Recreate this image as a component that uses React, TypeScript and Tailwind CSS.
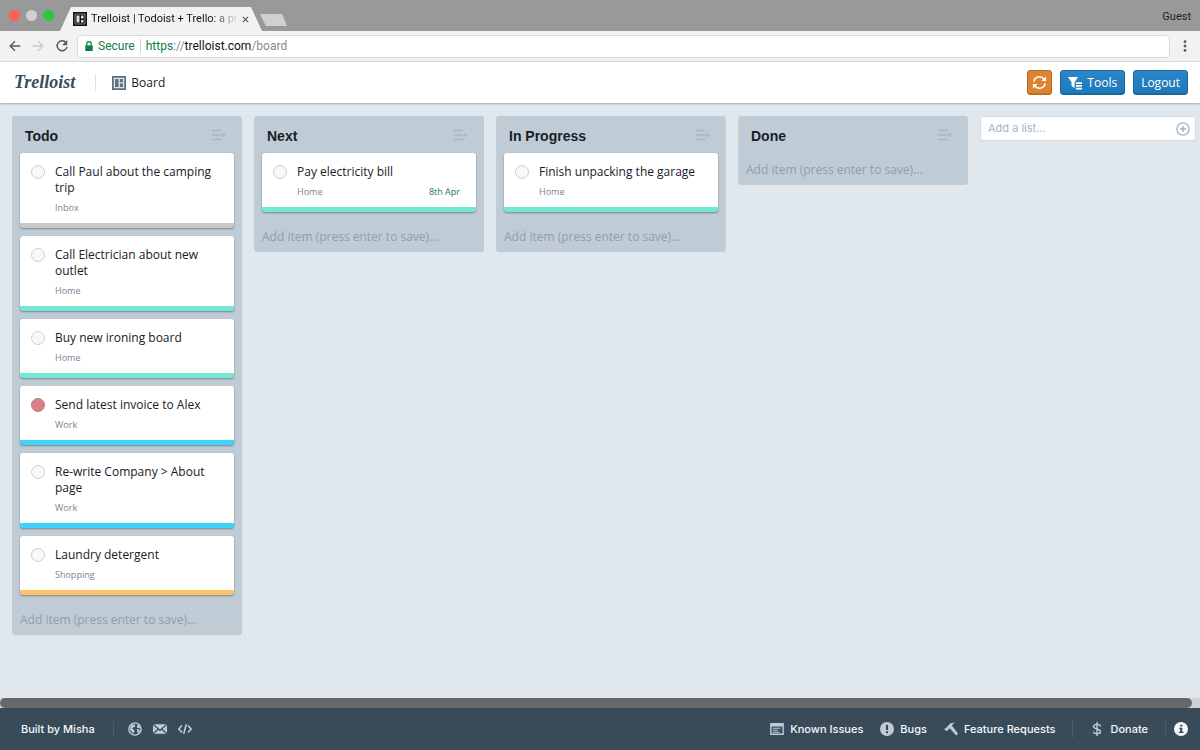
import type { ReactNode } from "react";
import clsx from "clsx";

type Task = {
  title: string;
  project: "Inbox" | "Home" | "Work" | "Shopping";
  due?: string;
  urgent?: boolean;
};

type List = { name: string; tasks: Task[] };

const lists: List[] = [
  {
    name: "Todo",
    tasks: [
      { title: "Call Paul about the camping trip", project: "Inbox" },
      { title: "Call Electrician about new outlet", project: "Home" },
      { title: "Buy new ironing board", project: "Home" },
      { title: "Send latest invoice to Alex", project: "Work", urgent: true },
      { title: "Re-write Company > About page", project: "Work" },
      { title: "Laundry detergent", project: "Shopping" },
    ],
  },
  {
    name: "Next",
    tasks: [{ title: "Pay electricity bill", project: "Home", due: "8th Apr" }],
  },
  {
    name: "In Progress",
    tasks: [{ title: "Finish unpacking the garage", project: "Home" }],
  },
  { name: "Done", tasks: [] },
];

// bottom stripe of a card, one colour per Todoist project
const stripe = {
  Inbox: "border-[#c8c8c8]",
  Home: "border-[#74e8d4]",
  Work: "border-[#3fd2fb]",
  Shopping: "border-[#ffc36c]",
};

function Icon({ className = "size-3.5", children }: { className?: string; children: ReactNode }) {
  return (
    <svg viewBox="0 0 16 16" fill="currentColor" aria-hidden className={clsx("shrink-0", className)}>
      {children}
    </svg>
  );
}

function BrowserChrome() {
  return (
    <div className="font-[Roboto,sans-serif]">
      <div className="flex h-[31px] items-end bg-[#999]">
        <div className="flex gap-1.5 self-center pl-[9px]">
          <span className="size-[11px] rounded-full bg-[#ff5f57]" />
          <span className="size-[11px] rounded-full bg-[#d1d1d1]" />
          <span className="size-[11px] rounded-full bg-[#28c941]" />
        </div>
        <div className="ml-1.5 flex h-6 w-[202px] items-center bg-[#f2f2f2] pr-[15px] pl-[13px] [clip-path:polygon(11px_0,191px_0,100%_100%,0_100%)]">
          <svg viewBox="0 0 14 14" aria-hidden className="size-3.5 shrink-0">
            <path d="M0 0h14v14H0z" fill="#111" />
            <path d="M2 2h10v10H2z" fill="none" stroke="#999" strokeWidth="0.8" />
            <path d="M3.5 3.5h3v7h-3zM8 3.5h2.5v3H8zM8 8h2.5v2.5H8z" fill="#ddd" />
          </svg>
          <span className="ml-1 flex-1 pt-px text-[11px] whitespace-nowrap text-[#111] [mask-image:linear-gradient(90deg,#000_82%,transparent)]">
            Trelloist | Todoist + Trello: a pr
          </span>
          <button type="button" aria-label="Close tab" className="ml-1 text-[#555]">
            <svg viewBox="0 0 8 8" stroke="currentColor" strokeWidth="1.3" className="size-[7px]">
              <path d="M1 1l6 6M7 1L1 7" />
            </svg>
          </button>
        </div>
        <button
          type="button"
          aria-label="New tab"
          className="mb-[5px] -ml-0.5 h-3 w-[27px] bg-[#d0d0d0] [clip-path:polygon(0_0,82%_0,100%_100%,22%_100%)]"
        />
        <span className="ml-auto self-center pt-[3px] pr-[9px] text-[11px] text-[#222]">Guest</span>
      </div>
      <div className="flex h-[31px] items-center border-b border-[#dcdcdc] bg-[#f2f2f2] pl-2">
        <button type="button" aria-label="Back" className="text-[#5a5a5a]">
          <Icon><path d="M14 8H2.5M8 2.5L2.5 8 8 13.5" fill="none" stroke="currentColor" strokeWidth="1.6" /></Icon>
        </button>
        <button type="button" aria-label="Forward" className="ml-[9px] text-[#ccc]">
          <Icon><path d="M2 8h11.5M8 2.5L13.5 8 8 13.5" fill="none" stroke="currentColor" strokeWidth="1.6" /></Icon>
        </button>
        <button type="button" aria-label="Reload" className="ml-2.5 text-[#5a5a5a]">
          <Icon>
            <path d="M12.6 4.2A5.7 5.7 0 1 0 13.7 9" fill="none" stroke="currentColor" strokeWidth="1.7" />
            <path d="M14 1v6H8z" />
          </Icon>
        </button>
        <div className="ml-2 flex h-[23px] flex-1 items-center rounded-sm border border-[#dadada] bg-white px-1.5 text-xs text-[#8a8a8a]">
          <Icon className="size-2.5 text-[#0b8043]">
            <path d="M2 7h12v9H2z" />
            <path d="M4.5 8V4.5a3.5 3.5 0 0 1 7 0V8" fill="none" stroke="currentColor" strokeWidth="2" />
          </Icon>
          <span className="ml-1 text-[#0b8043]">Secure</span>
          <span className="mx-[5px] h-3.5 w-px bg-[#d5d5d5]" />
          <span>
            <span className="text-[#0b8043]">https</span>://<span className="text-[#111]">trelloist.com</span>/board
          </span>
        </div>
        <button type="button" aria-label="Menu" className="mx-2 text-[#5a5a5a]">
          <Icon>
            <circle cx="8" cy="3" r="1.6" />
            <circle cx="8" cy="8" r="1.6" />
            <circle cx="8" cy="13" r="1.6" />
          </Icon>
        </button>
      </div>
    </div>
  );
}

const button =
  "flex h-[25px] items-center rounded-[3px] border text-xs text-white shadow-[inset_0_-1px_0_rgba(16,22,26,0.15)]";

function Header() {
  return (
    <header className="z-10 flex h-[41px] items-center bg-white pr-3 pl-3.5 shadow-[0_1px_2px_rgba(16,22,26,0.3)]">
      <a
        href="#"
        className="font-['Liberation_Serif',cursive] text-[18px] font-bold text-[#3a4b59] italic"
      >
        Trelloist
      </a>
      <span className="ml-5 h-[17px] w-px bg-[#dde1e4]" />
      <a href="#board" className="ml-4 flex items-center gap-[5px] text-xs text-[#182026]">
        <Icon className="size-3.5 text-[#5c7080]">
          <path d="M1 1h14v14H1z" fill="#dfe5ea" stroke="currentColor" strokeWidth="2" />
          <path d="M3.5 3.5h4v9h-4zM9 3.5h3.5V7H9zM9 8.500h3.5v4H9z" />
        </Icon>
        Board
      </a>
      <div className="ml-auto flex gap-2">
        <button
          type="button"
          aria-label="Sync"
          className={clsx(button, "w-[25px] justify-center border-[#b5691f] bg-[#de8430]")}
        >
          <Icon className="size-[15px]">
            <path d="M2 7a6 6 0 0 1 10.7-2.7M14 9a6 6 0 0 1-10.7 2.7" fill="none" stroke="currentColor" strokeWidth="1.7" />
            <path d="M15 1.500v5H10zM1 14.500v-5h5z" />
          </Icon>
        </button>
        <button
          type="button"
          className={clsx(button, "gap-[5px] border-[#1a679f] bg-linear-to-b from-[#2c86c7] to-[#1a79ba] px-[7px]")}
        >
          <Icon className="size-3.5">
            <path d="M0 1h11.500L7.500 7v7L4 11V7z" />
            <path d="M9 7h7v2H9zM9 10.300h7v2H9zM9 13.500h7v2H9z" />
          </Icon>
          Tools
        </button>
        <button
          type="button"
          className={clsx(button, "border-[#1a679f] bg-linear-to-b from-[#2c86c7] to-[#1a79ba] px-[7px]")}
        >
          Logout
        </button>
      </div>
    </header>
  );
}

function TaskCard({ task }: { task: Task }) {
  return (
    <li
      className={clsx(
        "flex gap-2.5 rounded-[3px] border-b-[5px] bg-white pt-[11px] pr-4 pb-2 pl-[11px] shadow-[0_1px_2px_rgba(16,22,26,0.4)]",
        stripe[task.project],
      )}
    >
      <input
        type="checkbox"
        aria-label={task.title}
        className={clsx(
          "mt-px size-3.5 shrink-0 appearance-none rounded-full border",
          task.urgent ? "border-[#bf7a7f] bg-[#d68086]" : "border-[#ccd1d5] bg-[#f7f8fa]",
        )}
      />
      <div className="min-w-0 flex-1">
        <h3 className="text-xs leading-4 text-[#182026]">{task.title}</h3>
        <p className="mt-1 flex justify-between text-[9px] leading-[15px] text-[#738694]">
          {task.project}
          {task.due && <span className="text-[#0d8050]">{task.due}</span>}
        </p>
      </div>
    </li>
  );
}

function BoardList({ list }: { list: List }) {
  return (
    <section className="flex w-[230px] shrink-0 flex-col rounded-[3px] bg-[#bfccd6] px-2 pb-1.5">
      <div className="flex h-[37px] items-center justify-between pr-2 pl-[5px]">
        <h2 className="pt-0.5 font-['Liberation_Sans',sans-serif] text-sm font-bold text-[#182026]">{list.name}</h2>
        <button type="button" aria-label={`${list.name} options`} className="text-[#a7b6c2]">
          <Icon className="size-3.5">
            <path d="M0 2h10.500v1.700H0zM0 7.200h10.500v1.700H0zM0 12.400h10.500v1.700H0zM12 5l3.500 3-3.500 3z" />
          </Icon>
        </button>
      </div>
      {list.tasks.length > 0 && (
        <ul className="mb-2 flex flex-col gap-2">
          {list.tasks.map((task) => (
            <TaskCard key={task.title} task={task} />
          ))}
        </ul>
      )}
      <input
        type="text"
        aria-label={`Add item to ${list.name}`}
        placeholder="Add item (press enter to save)..."
        className="mt-1.5 h-5 w-full bg-transparent text-xs outline-none placeholder:text-[#8f9fad]"
      />
    </section>
  );
}

function Footer() {
  return (
    <footer className="flex h-[42px] items-center bg-[#394b59] pr-3 pl-[21px] font-[Inter,sans-serif] text-[11px] font-medium text-[#f5f8fa]">
      <span>Built by Misha</span>
      <span className="mr-3.5 ml-[18px] h-[17px] w-px bg-[#4a5c6a]" />
      <nav className="flex gap-[11px] text-[#bfccd6]">
        <a href="#site" aria-label="Website">
          <Icon>
            <circle cx="8" cy="8" r="7" fill="none" stroke="currentColor" strokeWidth="1.6" />
            <path d="M4 3.500l3-1 1.500 1-1 2-2 1-.5 1.500 2 1 .5 1.500-1.500 2.500-1.500-2-2-2L2.500 6zM10 4l2.500-.5L14 6.500l-1.500.5-2-.5zM10 8l3 .5.5 1.500-2 3-1-2z" />
          </Icon>
        </a>
        <a href="#email" aria-label="Email">
          <Icon>
            <path d="M1 2.500h14L8 8.500zM0 3.500L5 8l-5 4.500zM16 3.500L11 8l5 4.500zM6 9l2 1.500L10 9l5 4.500H1z" />
          </Icon>
        </a>
        <a href="#code" aria-label="Source code">
          <Icon>
            <path d="M4.500 4L1 8l3.500 4M11.500 4L15 8l-3.500 4M9.500 2.500l-3 11" fill="none" stroke="currentColor" strokeWidth="1.8" />
          </Icon>
        </a>
      </nav>
      <nav className="ml-auto flex items-center">
        <a href="#issues" className="flex items-center gap-1.5">
          <Icon className="size-3.5 text-[#bfccd6]">
            <path d="M1 2h14v12H1z" fill="none" stroke="currentColor" strokeWidth="1.6" />
            <path d="M1 2h14v3H1zM3 6.500h9v1.200H3zM3 8.800h6V10H3zM3 11h8v1.200H3z" />
          </Icon>
          Known Issues
        </a>
        <a href="#bugs" className="ml-[17px] flex items-center gap-1.5">
          <Icon className="size-3.5 text-[#bfccd6]">
            <path fillRule="evenodd" d="M8 0a8 8 0 1 0 0 16A8 8 0 0 0 8 0zM6.800 3h2.400v6H6.800zM6.800 10.500h2.400v2.300H6.800z" />
          </Icon>
          Bugs
        </a>
        <a href="#features" className="ml-[17px] flex items-center gap-1.5">
          <Icon className="size-3.5 text-[#bfccd6]">
            <path d="M0 8l2-1 5.500-5.500L12 .5 9 4l7 9.500-2 2L6.500 7 3 10.500z" />
          </Icon>
          Feature Requests
        </a>
        <span className="mx-[17px] h-[17px] w-px bg-[#4a5c6a]" />
        <a href="#donate" className="flex items-center gap-1.5">
          <Icon className="size-3.5 text-[#bfccd6]">
            <path
              d="M12 5c0-3-8-3-8 0s8 3 8 6-8 3-8 0M8 0v16"
              fill="none"
              stroke="currentColor"
              strokeWidth="1.6"
            />
          </Icon>
          Donate
        </a>
        <span className="ml-[17px] h-[17px] w-px bg-[#4a5c6a]" />
        <button type="button" aria-label="About" className="ml-2">
          <Icon>
            <path fillRule="evenodd" d="M8 0a8 8 0 1 0 0 16A8 8 0 0 0 8 0zM7 3h2.500v2.200H7zM6 6.500h3.500V11H11v1.500H5.500V11H7V8H6z" />
          </Icon>
        </button>
      </nav>
    </footer>
  );
}

export default function App() {
  return (
    <div className="flex min-h-screen flex-col bg-[#e1e8ed] font-['Open_Sans',sans-serif]">
      <BrowserChrome />
      <Header />
      <main className="flex flex-1 items-start gap-3 overflow-hidden px-3 pt-[13px]">
        {lists.map((list) => (
          <BoardList key={list.name} list={list} />
        ))}
        <form className="flex h-[25px] w-[216px] shrink-0 items-center rounded-[3px] border border-[#d3dae0] bg-white pr-[5px] pl-[7px] font-[Inter,sans-serif]">
          <input
            type="text"
            aria-label="Add a list"
            placeholder="Add a list..."
            className="min-w-0 flex-1 text-[11px] outline-none placeholder:text-[#a7b6c2]"
          />
          <button type="button" aria-label="Add list" className="text-[#a7b6c2]">
            <Icon>
              <circle cx="8" cy="8" r="7" fill="none" stroke="currentColor" strokeWidth="1.6" />
              <path d="M8 4.500v7M4.500 8h7" stroke="currentColor" strokeWidth="1.8" />
            </Icon>
          </button>
        </form>
      </main>
      <div className="bg-[#ccd2d8] pr-2">
        <div className="h-2.5 rounded-full bg-[#66696b]" />
      </div>
      <Footer />
    </div>
  );
}
